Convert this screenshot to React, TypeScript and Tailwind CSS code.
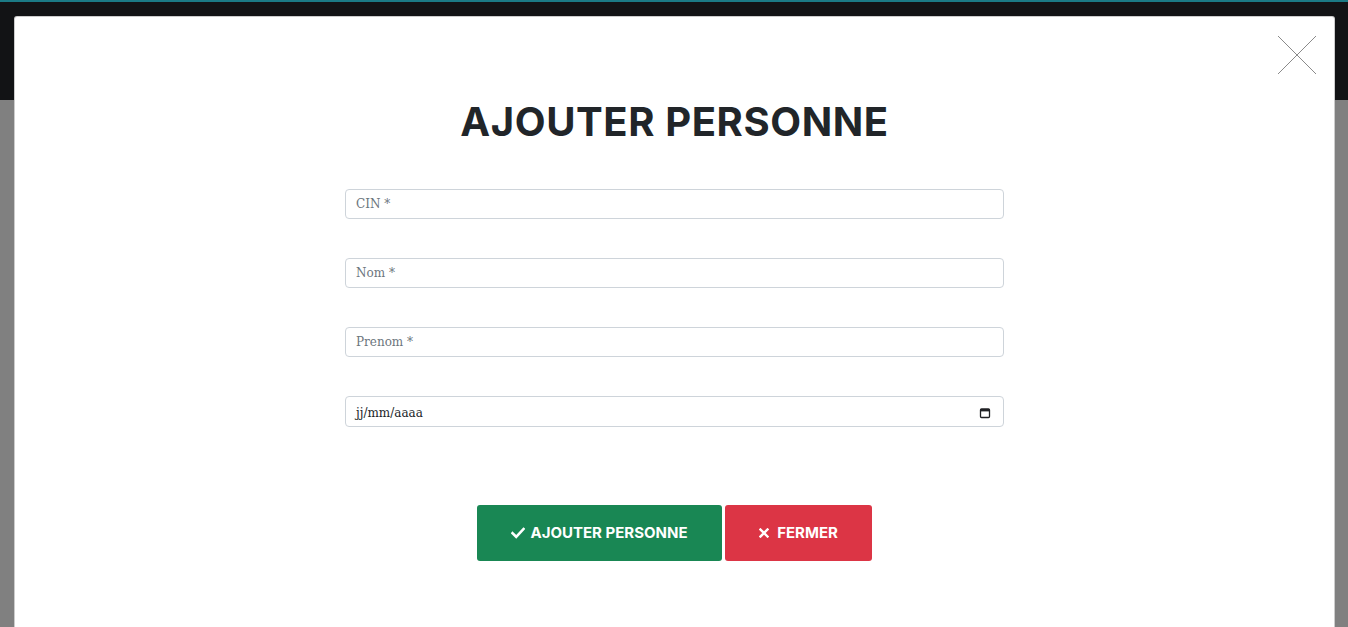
import React from "react";

const FIELDS = ["CIN *", "Nom *", "Prenom *"];

const CalendarIcon = () => (
  <svg width="12" height="12" viewBox="0 0 12 12" className="text-[#202124]">
    <rect x="1.5" y="2" width="9" height="8.5" rx="1" fill="none" stroke="currentColor" strokeWidth="1.3" />
    <rect x="1.5" y="2" width="9" height="2.4" fill="currentColor" />
  </svg>
);

const CheckIcon = () => (
  <svg width="14" height="12" viewBox="0 0 14 12" fill="none">
    <path d="M1.5 6.2 L5.2 9.8 L12.5 2" stroke="white" strokeWidth="2.6" strokeLinecap="square" />
  </svg>
);

const TimesIcon = () => (
  <svg width="10" height="10" viewBox="0 0 10 10" fill="none">
    <path d="M1.5 1.5 L8.5 8.5 M8.5 1.5 L1.5 8.5" stroke="white" strokeWidth="2.4" strokeLinecap="square" />
  </svg>
);

export default function App() {
  return (
    <div className="relative w-full h-[627px] overflow-hidden bg-[#808080]">
      {/* Page header behind the backdrop */}
      <div className="h-[100px] bg-[#121315] border-t-2 border-[#1b7a85]" />

      {/* Modal */}
      <div className="absolute left-[14px] top-[16px] w-[1321px] h-[640px] bg-white rounded-[3px] border border-black/20">
        <button className="absolute right-[17px] top-[18px] w-[40px] h-[40px]">
          <svg width="40" height="40" viewBox="0 0 40 40" fill="none">
            <path d="M1 1 L39 39 M39 1 L1 39" stroke="#8a8a8a" strokeWidth="1" />
          </svg>
        </button>

        <div className="flex flex-col items-center pt-[81px]">
          <h2 className="text-[40px] leading-[48px] font-bold text-[#212529] tracking-[0.6px]" style={{ fontFamily: "Inter, 'Liberation Sans', sans-serif" }}>
            AJOUTER PERSONNE
          </h2>

          <div className="mt-[43px] w-[659px] flex flex-col gap-[39px]" style={{ fontFamily: "'DejaVu Serif', 'Liberation Serif', serif" }}>
            {FIELDS.map((f) => (
              <input
                key={f}
                placeholder={f}
                className="h-[30px] w-full rounded-[4px] border border-[#ced4da] px-[10px] text-[12px] text-[#212529] placeholder:text-[#6c757d] outline-none"
              />
            ))}
            <div className="h-[31px] w-full rounded-[4px] border border-[#ced4da] pl-[10px] pr-[12px] pt-[2px] flex items-center justify-between text-[12px] text-[#212529]">
              <span>jj/mm/aaaa</span>
              <CalendarIcon />
            </div>
          </div>

          <div className="mt-[78px] flex gap-[3px] text-[15px] font-bold text-white" style={{ fontFamily: "Inter, 'Liberation Sans', sans-serif" }}>
            <button className="w-[245px] h-[56px] rounded-[3px] bg-[#198754] flex items-center justify-center gap-[5px]">
              <CheckIcon />
              AJOUTER PERSONNE
            </button>
            <button className="w-[147px] h-[56px] rounded-[3px] bg-[#dc3545] flex items-center justify-center gap-[8px]">
              <TimesIcon />
              FERMER
            </button>
          </div>
        </div>
      </div>
    </div>
  );
}
